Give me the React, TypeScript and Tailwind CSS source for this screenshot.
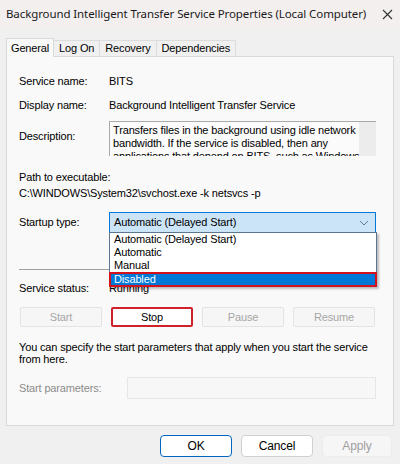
import React from "react";

const tabs = ["General", "Log On", "Recovery", "Dependencies"];
const startupOptions = ["Automatic (Delayed Start)", "Automatic", "Manual", "Disabled"];

const InfoRow: React.FC<{ label: string; children: React.ReactNode; className?: string }> = ({
  label,
  children,
  className = "",
}) => (
  <div className={`flex items-center ${className}`}>
    <span className="w-[90px] shrink-0">{label}</span>
    <span>{children}</span>
  </div>
);

const ServiceButton: React.FC<{ label: string; active?: boolean }> = ({ label, active }) => (
  <div
    className={`flex h-[20px] w-[82px] items-center justify-center rounded-[2px] ${
      active
        ? "border-2 border-[#d0202a] bg-white text-black"
        : "border border-[#e3e3e3] bg-[#f6f6f6] text-[#a6a6a6]"
    }`}
  >
    {label}
  </div>
);

export default function App() {
  return (
    <div
      className="flex h-[464px] w-[400px] flex-col overflow-hidden bg-[#f0f0f0] text-[11px] tracking-[-0.15px] text-black"
      style={{ fontFamily: '"Liberation Sans", Arial, sans-serif' }}
    >
      {/* title bar */}
      <div className="flex h-[28px] shrink-0 items-center justify-between bg-[#f4efef] pl-[6px] pr-[7px]">
        <span
          className="whitespace-nowrap text-[11.5px] tracking-[-0.1px] text-[#1a1a1a]"
          style={{ fontFamily: '"Noto Sans", sans-serif' }}
        >
          Background Intelligent Transfer Service Properties (Local Computer)
        </span>
        <svg width="11" height="11" viewBox="0 0 11 11" className="text-[#333]">
          <path d="M1 1L10 10M10 1L1 10" stroke="currentColor" strokeWidth="1.1" />
        </svg>
      </div>

      {/* tabs */}
      <div className="mt-[10px] flex h-[18px] items-end pl-[6px]">
        {tabs.map((t, i) =>
          i === 0 ? (
            <div
              key={t}
              className="relative z-10 -mb-px flex h-[19px] items-center border border-b-0 border-[#d9d9d9] bg-[#f9f9f9] px-[4px]"
            >
              {t}
            </div>
          ) : (
            <div
              key={t}
              className="flex h-[16px] items-center border border-b-0 border-l-0 border-[#dcdcdc] bg-[#f0f0f0] px-[5px]"
            >
              {t}
            </div>
          ),
        )}
      </div>

      {/* panel */}
      <div className="mx-[6px] flex h-[370px] flex-col border border-[#d9d9d9] bg-[#f9f9f9] pl-[12px] pr-[16px]">
        <InfoRow label="Service name:" className="mt-[16px] h-[16px]">
          BITS
        </InfoRow>
        <InfoRow label="Display name:" className="mt-[8px] h-[16px]">
          Background Intelligent Transfer Service
        </InfoRow>
        <div className="mt-[8px] flex">
          <span className="mt-[7px] w-[90px] shrink-0">Description:</span>
          <div className="relative h-[35px] w-[267px] overflow-hidden border-l border-t border-[#a9a9a9] bg-[#fbfbfb]">
            <p className="w-[252px] pl-[3px] pt-[2px] leading-[13px]">
              Transfers files in the background using idle network bandwidth. If the service is disabled, then any
              applications that depend on BITS, such as Windows Update, will not be able to download.
            </p>
            <div className="absolute right-0 top-0 h-full w-[17px] bg-[#ececec]" />
          </div>
        </div>
        <div className="mt-[13px] leading-[16px]">Path to executable:</div>
        <div className="leading-[16px]">C:\WINDOWS\System32\svchost.exe -k netsvcs -p</div>

        <div className="relative mt-[11px] flex items-center">
          <span className="w-[90px] shrink-0">Startup type:</span>
          <div className="flex h-[21px] w-[267px] items-center justify-between border border-[#0078d7] bg-[#cce4f7] pl-[4px] pr-[6px]">
            <span>Automatic (Delayed Start)</span>
            <svg width="10" height="6" viewBox="0 0 10 6">
              <path d="M1 1l4 4 4-4" fill="none" stroke="#6b7a8a" strokeWidth="1" />
            </svg>
          </div>
          {/* open dropdown list */}
          <div className="absolute left-[90px] top-[20px] z-20 w-[268px] border border-[#5b7593] bg-white shadow-[2px_2px_2px_rgba(0,0,0,0.25)]">
            {startupOptions.map((o) =>
              o === "Disabled" ? (
                <div
                  key={o}
                  className="-mx-px -mb-px h-[15px] border-2 border-[#d3121c] bg-[#0078d7] pl-[3px] leading-[11px] text-white"
                >
                  {o}
                </div>
              ) : (
                <div key={o} className="h-[13px] pl-[4px] leading-[13px]">
                  {o}
                </div>
              ),
            )}
          </div>
        </div>

        <div className="mt-[36px] h-px bg-[#a0a0a0]" />

        <InfoRow label="Service status:" className="mt-[11px] h-[14px]">
          Running
        </InfoRow>

        <div className="mt-[12px] flex gap-[9px] pl-[1px]">
          <ServiceButton label="Start" />
          <ServiceButton label="Stop" active />
          <ServiceButton label="Pause" />
          <ServiceButton label="Resume" />
        </div>

        <p className="mt-[14px] leading-[12px]">
          You can specify the start parameters that apply when you start the service from here.
        </p>

        <div className="mt-[12px] flex items-center">
          <span className="w-[108px] shrink-0 text-[#8c8c8c]">Start parameters:</span>
          <div className="h-[22px] w-[249px] border border-[#e6e6e6] bg-[#f7f7f7]" />
        </div>
      </div>

      {/* dialog buttons */}
      <div className="mt-[9px] flex justify-end gap-[9px] pr-[8px] text-[12px]">
        <div className="flex h-[22px] w-[72px] items-center justify-center rounded-[4px] border border-[#0067c0] bg-white">
          OK
        </div>
        <div className="flex h-[22px] w-[72px] items-center justify-center rounded-[4px] border border-[#d0d0d0] bg-white">
          Cancel
        </div>
        <div className="flex h-[22px] w-[70px] items-center justify-center rounded-[4px] border border-[#ececec] bg-[#f6f6f6] text-[#a0a0a0]">
          Apply
        </div>
      </div>
    </div>
  );
}
